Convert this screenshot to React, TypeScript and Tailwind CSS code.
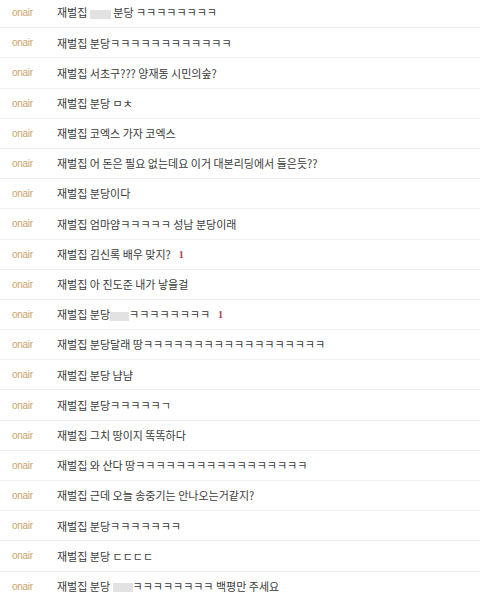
import React from "react";

type Row = { parts: (string | { box: number })[]; badge?: string };

const rows: Row[] = [
  { parts: ["재벌집 ", { box: 21 }, " 분당 ㅋㅋㅋㅋㅋㅋㅋㅋ"] },
  { parts: ["재벌집 분당ㅋㅋㅋㅋㅋㅋㅋㅋㅋㅋㅋㅋ"] },
  { parts: ["재벌집 서초구??? 양재동 시민의숲?"] },
  { parts: ["재벌집 분당 ㅁㅊ"] },
  { parts: ["재벌집 코엑스 가자 코엑스"] },
  { parts: ["재벌집 어 돈은 필요 없는데요 이거 대본리딩에서 들은듯??"] },
  { parts: ["재벌집 분당이다"] },
  { parts: ["재벌집 엄마얌ㅋㅋㅋㅋㅋ 성남 분당이래"] },
  { parts: ["재벌집 김신록 배우 맞지?"], badge: "1" },
  { parts: ["재벌집 아 진도준 내가 낳을걸"] },
  { parts: ["재벌집 분당", { box: 19 }, "ㅋㅋㅋㅋㅋㅋㅋㅋ"], badge: "1" },
  { parts: ["재벌집 분당달래 땅ㅋㅋㅋㅋㅋㅋㅋㅋㅋㅋㅋㅋㅋㅋㅋㅋㅋㅋ"] },
  { parts: ["재벌집 분당 냠냠"] },
  { parts: ["재벌집 분당ㅋㅋㅋㅋㅋㄱ"] },
  { parts: ["재벌집 그치 땅이지 똑똑하다"] },
  { parts: ["재벌집 와 산다 땅ㅋㅋㅋㅋㅋㅋㅋㅋㅋㅋㅋㅋㅋㅋㅋㅋㅋ"] },
  { parts: ["재벌집 근데 오늘 송중기는 안나오는거같지?"] },
  { parts: ["재벌집 분당ㅋㅋㅋㅋㅋㅋㅋ"] },
  { parts: ["재벌집 분당 ㄷㄷㄷㄷ"] },
  { parts: ["재벌집 분당 ", { box: 20 }, "ㅋㅋㅋㅋㅋㅋㅋㅋ 백평만 주세요"] },
];

export default function App() {
  return (
    <div className="w-[480px] h-[599px] overflow-hidden bg-white">
      <ul className="-mt-[2px]">
        {rows.map((row, i) => (
          <li
            key={i}
            className="flex items-center h-[30.2px] border-b border-[#efefef]"
          >
            <span className="w-[57px] pl-[12px] shrink-0 text-[10px] tracking-[-0.03em] text-[#c9a46c] font-['Liberation_Sans',sans-serif]">
              onair
            </span>
            <span className="text-[11px] text-[#3a3a3a] whitespace-pre font-['Noto_Sans_CJK_KR',sans-serif]">
              {row.parts.map((p, j) =>
                typeof p === "string" ? (
                  <React.Fragment key={j}>{p}</React.Fragment>
                ) : (
                  <span
                    key={j}
                    className="inline-block h-[9px] bg-[#e2e2e2] align-middle"
                    style={{ width: p.box }}
                  />
                )
              )}
            </span>
            {row.badge && (
              <span className="ml-[8px] text-[10px] font-bold text-[#a8404c] font-['Liberation_Serif',serif]">
                {row.badge}
              </span>
            )}
          </li>
        ))}
      </ul>
    </div>
  );
}
